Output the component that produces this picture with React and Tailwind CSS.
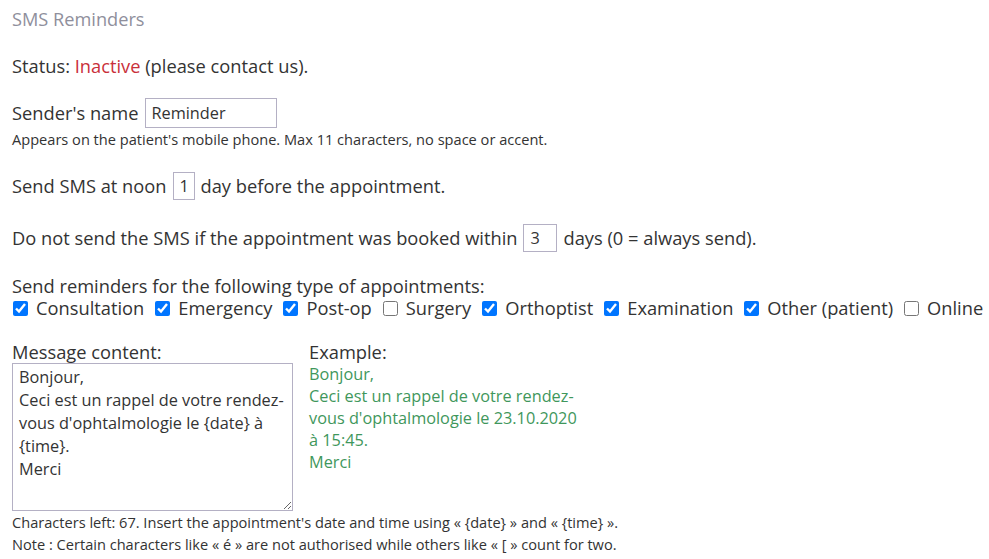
const types = [
  { label: "Consultation", checked: true },
  { label: "Emergency", checked: true },
  { label: "Post-op", checked: true },
  { label: "Surgery", checked: false },
  { label: "Orthoptist", checked: true },
  { label: "Examination", checked: true },
  { label: "Other (patient)", checked: true },
  { label: "Online", checked: false },
];

const message =
  "Bonjour,\nCeci est un rappel de votre rendez-vous d'ophtalmologie le {date} à {time}.\nMerci";

export default function App() {
  return (
    <div className="min-h-screen bg-white px-[12px] pt-[8px] font-['Open_Sans',sans-serif] text-[18.3px] leading-[22px] text-[#333]">
      <h2 className="text-[18.2px] font-normal leading-[22px] text-[#8f8f9c]">SMS Reminders</h2>

      <p className="mt-[25px]">
        Status: <span className="text-[#c9303a]">Inactive</span> (please contact us).
      </p>

      <div className="mt-[21px] flex items-center">
        <span>Sender's name</span>
        <input
          defaultValue="Reminder"
          className="ml-[7px] h-[30px] w-[132px] border border-[#b4b0c4] px-[5px] text-[16.3px] text-[#333] outline-none"
        />
      </div>
      <p className="mt-[2px] text-[14.6px] leading-[18px]">
        Appears on the patient's mobile phone. Max 11 characters, no space or accent.
      </p>

      <div className="mt-[24px] flex items-center">
        <span>Send SMS at noon</span>
        <input
          defaultValue="1"
          className="mx-[6px] h-[28px] w-[22px] border border-[#b4b0c4] px-[6px] text-[16.3px] text-[#333] outline-none"
        />
        <span>day before the appointment.</span>
      </div>

      <div className="mt-[24px] flex items-center">
        <span>Do not send the SMS if the appointment was booked within</span>
        <input
          defaultValue="3"
          className="mx-[6px] h-[28px] w-[34px] border border-[#b4b0c4] px-[6px] text-[16.3px] text-[#333] outline-none"
        />
        <span>days (0 = always send).</span>
      </div>

      <p className="mt-[23px]">Send reminders for the following type of appointments:</p>
      <div className="flex items-center whitespace-nowrap">
        {types.map((t) => (
          <label key={t.label} className="mr-[10px] flex items-center">
            <input
              type="checkbox"
              defaultChecked={t.checked}
              className="ml-px mr-[8px] h-[15px] w-[15px] accent-[#0075ff]"
            />
            <span>{t.label}</span>
          </label>
        ))}
      </div>

      <div className="mt-[22px] flex gap-[16px]">
        <div className="w-[281px]">
          <p>Message content:</p>
          <textarea
            defaultValue={message}
            className="block h-[148px] w-[281px] resize-y border border-[#b4b0c4] py-[2px] pl-[6px] pr-[2px] text-[16.3px] leading-[23px] text-[#333] outline-none"
          />
        </div>
        <div className="w-[276px]">
          <p>Example:</p>
          <div className="text-[16.3px] text-[#3f975c]">
            <p>Bonjour,</p>
            <p>Ceci est un rappel de votre rendez-vous d'ophtalmologie le 23.10.2020 à 15:45.</p>
            <p>Merci</p>
          </div>
        </div>
      </div>

      <div className="text-[14.6px] leading-[22px]">
        <p>Characters left: 67. Insert the appointment's date and time using « {"{date}"} » and « {"{time}"} ».</p>
        <p>Note : Certain characters like « é » are not authorised while others like « [ » count for two.</p>
      </div>
    </div>
  );
}
